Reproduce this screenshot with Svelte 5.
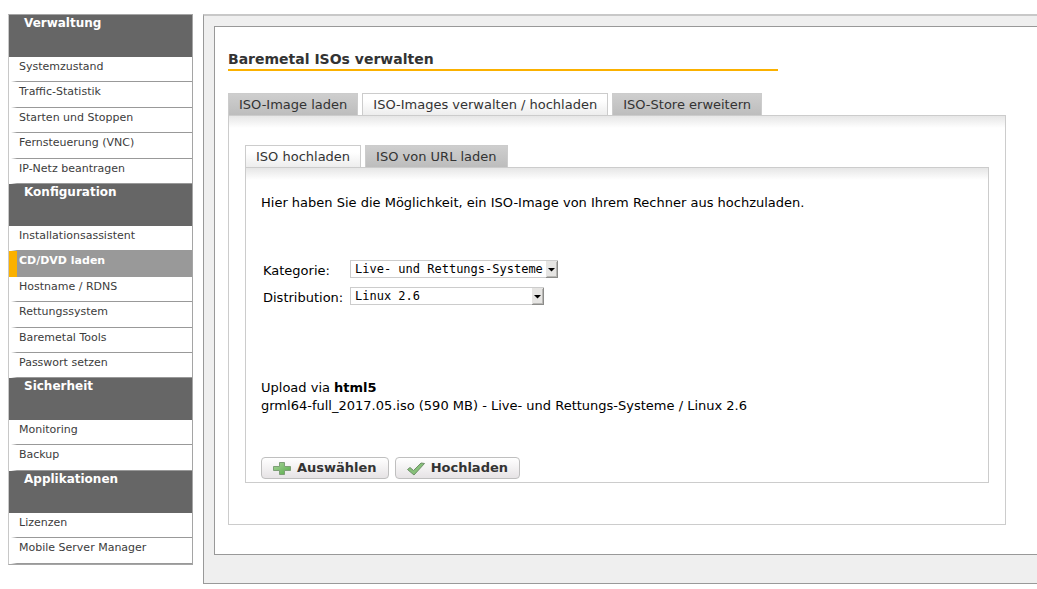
<script>
  const menu = [
    { title: 'Verwaltung', items: ['Systemzustand', 'Traffic-Statistik', 'Starten und Stoppen', 'Fernsteuerung (VNC)', 'IP-Netz beantragen'] },
    { title: 'Konfiguration', items: ['Installationsassistent', 'CD/DVD laden', 'Hostname / RDNS', 'Rettungssystem', 'Baremetal Tools', 'Passwort setzen'] },
    { title: 'Sicherheit', items: ['Monitoring', 'Backup'] },
    { title: 'Applikationen', items: ['Lizenzen', 'Mobile Server Manager'] }
  ];
  const tabs = ['ISO-Image laden', 'ISO-Images verwalten / hochladen', 'ISO-Store erweitern'];
  const subTabs = ['ISO hochladen', 'ISO von URL laden'];

  let page = $state('CD/DVD laden');
  let tab = $state(1);
  let subTab = $state(0);
</script>

{#snippet arrow()}
  <svg class="arrow" width="12" height="17" viewBox="0 0 12 17" aria-hidden="true">
    <rect width="12" height="17" fill="#e6e5e3" />
    <path d="M11 0h1v17H0v-1h11z" fill="#8c8c8a" />
    <path d="M10 1h1v15H1v-1h9z" fill="#b9b8b5" />
    <path d="M2 7h7L5.5 10.500z" fill="#000" />
  </svg>
{/snippet}

<div class="page">
  <nav class="sidebar">
    {#each menu as group}
      <section>
        <h2>{group.title}</h2>
        <ul>
          {#each group.items as item}
            <li class:active={item === page}>
              <a href="#top" onclick={(e) => { e.preventDefault(); page = item; }}>{item}</a>
            </li>
          {/each}
        </ul>
      </section>
    {/each}
  </nav>

  <main class="frame">
    <div class="content">
      <h1>Baremetal ISOs verwalten</h1>
      <div class="tabs" role="tablist">
        {#each tabs as label, i}
          <button class="tab" class:selected={i === tab} role="tab" aria-selected={i === tab} onclick={() => (tab = i)}>{label}</button>
        {/each}
      </div>
      <div class="panel outer">
        <div class="tabs" role="tablist">
          {#each subTabs as label, i}
            <button class="tab" class:selected={i === subTab} role="tab" aria-selected={i === subTab} onclick={() => (subTab = i)}>{label}</button>
          {/each}
        </div>
        <div class="panel inner">
          <p>Hier haben Sie die Möglichkeit, ein ISO-Image von Ihrem Rechner aus hochzuladen.</p>
          <form class="fields">
            <label for="category">Kategorie:</label>
            <div class="select wide">
              <select id="category"><option>Live- und Rettungs-Systeme</option></select>
              {@render arrow()}
            </div>
            <label for="distribution">Distribution:</label>
            <div class="select">
              <select id="distribution"><option>Linux 2.6</option></select>
              {@render arrow()}
            </div>
          </form>
          <p>Upload via <b>html5</b><br />grml64-full_2017.05.iso (590 MB) - Live- und Rettungs-Systeme / Linux 2.6</p>
          <div class="actions">
            <button class="action">
              <svg width="18" height="16" viewBox="0 0 18 16" aria-hidden="true">
                <defs>
                  <linearGradient id="plus" x1="0" y1="0" x2="1" y2="1">
                    <stop offset="0" stop-color="#a9d49b" />
                    <stop offset="1" stop-color="#56ab48" />
                  </linearGradient>
                </defs>
                <path d="M6.500 1.500h5v4h6v4h-6v4h-5v-4h-6v-4h6z" fill="url(#plus)" stroke="#7d9f76" stroke-linejoin="round" />
              </svg>
              Auswählen
            </button>
            <button class="action">
              <svg width="18" height="16" viewBox="0 0 18 16" aria-hidden="true">
                <path d="M.500 8.500 3 6.500 6.500 9.500 14 2 17.500 2.500 7 14z" fill="#86c079" stroke="#6f8f69" stroke-linejoin="round" />
              </svg>
              Hochladen
            </button>
          </div>
        </div>
      </div>
    </div>
  </main>
</div>

<style>
  :global(body) {
    margin: 0;
    background: #fff;
    overflow-x: hidden;
  }
  .page {
    display: flex;
    align-items: flex-start;
    gap: 10px;
    padding: 14px 0 4px 8px;
    font: 13px/18px "DejaVu Sans", Verdana, sans-serif;
    color: #000;
  }
  h1, h2, p, ul {
    margin: 0;
    padding: 0;
  }
  .sidebar {
    box-sizing: border-box;
    flex: 0 0 185px;
    border: 1px solid #a5a5a5;
    border-left-color: #c8c8c8;
    font-size: 11px;
  }
  h2 {
    box-sizing: border-box;
    height: 42px;
    padding-left: 15px;
    background: #666;
    color: #fff;
    font-size: 12px;
    line-height: 16px;
  }
  ul {
    list-style: none;
  }
  li {
    box-sizing: border-box;
    height: 25px;
    padding-left: 10px;
    background: linear-gradient(90deg, #fff 2px, #999 8px) 0 100% / 100% 1px no-repeat;
    line-height: 20px;
  }
  li:nth-child(2),
  li:nth-child(4) {
    height: 26px;
  }
  li a {
    display: block;
    color: #3c3c3c;
    text-decoration: none;
  }
  li.active {
    padding-left: 2px;
    border-left: 8px solid #fbb100;
    background: #999;
    font-weight: bold;
  }
  li.active a {
    color: #fff;
  }
  .frame {
    flex: 1;
    padding: 10px 0 28px 10px;
    border: 1px solid #999;
    border-top: 2px solid #c8c8c8;
    border-right: 0;
    background: #efefef;
  }
  .content {
    padding: 22px 31px 29px 13px;
    border: 1px solid #999;
    border-right: 0;
    background: #fff;
  }
  h1 {
    max-width: 550px;
    margin-bottom: 22px;
    border-bottom: 2px solid #fbb100;
    color: #333;
    font-size: 14px;
    line-height: 20px;
  }
  .tabs {
    display: flex;
    gap: 4px;
  }
  .tab {
    height: 22px;
    padding: 0 10px;
    border: 1px solid #ccc;
    border-bottom: 0;
    background: linear-gradient(#cecece, #bdbdbd);
    color: #333;
    font: 13px/21px "DejaVu Sans", Verdana, sans-serif;
  }
  .tab.selected {
    background: linear-gradient(#fff 30%, #ededed);
  }
  .panel {
    border: 1px solid #ccc;
    background: linear-gradient(#e6e6e6, #fff 12px);
  }
  .outer {
    padding: 29px 16px 41px;
  }
  .inner {
    padding: 26px 15px 3px;
  }
  .fields {
    display: grid;
    grid-template-columns: 79px 1fr;
    align-items: start;
    gap: 8px;
    margin: 48px 0 73px 2px;
  }
  .fields label {
    height: 19px;
    line-height: 22px;
  }
  .select {
    position: relative;
    width: 194px;
    height: 18px;
  }
  .wide {
    width: 208px;
  }
  select {
    appearance: none;
    display: block;
    box-sizing: border-box;
    width: 100%;
    height: 18px;
    padding: 0 12px 0 4px;
    border: 1px solid #ccc;
    border-radius: 0;
    background: #fff;
    color: #000;
    font: 12px/16px "DejaVu Sans Mono", monospace;
  }
  .arrow {
    position: absolute;
    top: 1px;
    right: 0;
    pointer-events: none;
  }
  .actions {
    display: flex;
    gap: 6px;
    margin: 42px 0 0;
  }
  .action {
    display: flex;
    align-items: center;
    gap: 6px;
    height: 22px;
    padding: 0 11px;
    border: 1px solid #bfbfbf;
    border-radius: 4px;
    background: linear-gradient(#fff, #e6e3e5);
    color: #333;
    font: bold 13px/18px "DejaVu Sans", Verdana, sans-serif;
  }
  .action svg {
    margin-top: 2px;
  }
</style>
